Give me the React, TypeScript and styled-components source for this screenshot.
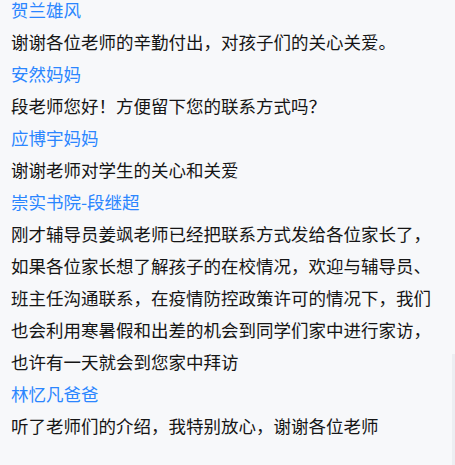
import React from "react";
import styled, { createGlobalStyle } from "styled-components";

const Global = createGlobalStyle`
  html, body {
    margin: 0;
    padding: 0;
    background: #f7f8fa;
  }
  body {
    font-family: "Noto Sans CJK SC", "Noto Sans", sans-serif;
  }
`;

const Page = styled.div`
  position: relative;
  width: 455px;
  height: 465px;
  overflow: hidden;
  background: #f7f8fa;
`;

const List = styled.div`
  display: flex;
  flex-direction: column;
  margin-top: -6px;
  padding: 0 20px 0 11px;
  width: 424px;
`;

const Message = styled.div`
  display: flex;
  flex-direction: column;
`;

const Name = styled.div`
  font-size: 17.5px;
  line-height: 32px;
  color: #2b86ff;
  white-space: nowrap;
`;

const Body = styled.div`
  font-size: 17.5px;
  line-height: 32px;
  color: #151515;
  word-break: break-all;
`;

const Track = styled.div`
  position: absolute;
  right: 0;
  top: 354px;
  bottom: 0;
  width: 3px;
  background: #eceef2;
`;

const messages = [
  { name: "贺兰雄风", text: "谢谢各位老师的辛勤付出，对孩子们的关心关爱。" },
  { name: "安然妈妈", text: "段老师您好！方便留下您的联系方式吗？" },
  { name: "应博宇妈妈", text: "谢谢老师对学生的关心和关爱" },
  {
    name: "崇实书院-段继超",
    text:
      "刚才辅导员姜飒老师已经把联系方式发给各位家长了，如果各位家长想了解孩子的在校情况，欢迎与辅导员、班主任沟通联系，在疫情防控政策许可的情况下，我们也会利用寒暑假和出差的机会到同学们家中进行家访，也许有一天就会到您家中拜访",
  },
  { name: "林忆凡爸爸", text: "听了老师们的介绍，我特别放心，谢谢各位老师" },
];

export default function App() {
  return (
    <Page>
      <Global />
      <List>
        {messages.map((m, i) => (
          <Message key={i}>
            <Name>{m.name}</Name>
            <Body>{m.text}</Body>
          </Message>
        ))}
      </List>
      <Track />
    </Page>
  );
}
